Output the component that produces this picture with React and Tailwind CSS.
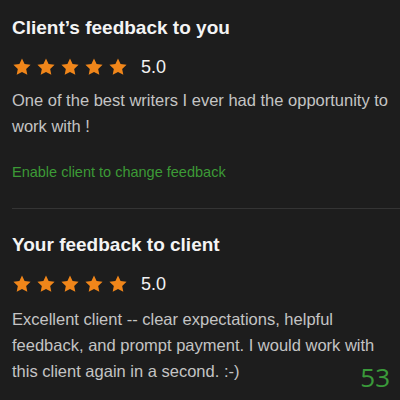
import React from "react";

const Star = () => (
  <svg width="20" height="20" viewBox="0 0 24 24" className="shrink-0">
    <path
      d="M12 1.8l3.1 6.6 7.2.9-5.3 5 1.4 7.1L12 17.9l-6.4 3.5L7 14.3 1.7 9.3l7.2-.9L12 1.8z"
      fill="#f0861a"
    />
  </svg>
);

const Rating = ({ value }) => (
  <div className="flex items-center h-[20px]">
    <div className="flex gap-[4px]">
      <Star />
      <Star />
      <Star />
      <Star />
      <Star />
    </div>
    <span className="ml-[13px] text-[18px] leading-[20px] text-[#f2f2f2]">{value}</span>
  </div>
);

export default function App() {
  return (
    <div
      className="w-[400px] h-[400px] bg-[#1d1d1d] overflow-hidden relative"
      style={{ fontFamily: '"Liberation Sans", Arial, sans-serif' }}
    >
      <section className="pl-[12px] pr-[4px] pt-[16px]">
        <h2 className="text-[19px] font-bold text-[#f4f4f4] leading-[24px]">
          Client’s feedback to you
        </h2>
        <div className="mt-[17px]">
          <Rating value="5.0" />
        </div>
        <p className="mt-[10px] text-[16.5px] leading-[26px] text-[#c4c4c4]">
          One of the best writers I ever had the opportunity to work with !
        </p>
        <p className="mt-[23px] text-[14.5px] leading-[20px] text-[#3c9a36]">
          Enable client to change feedback
        </p>
      </section>
      <div className="ml-[12px] mt-[26px] border-t border-[#343434]" />
      <section className="pl-[12px] pr-[4px] pt-[24px]">
        <h2 className="text-[19px] font-bold text-[#f4f4f4] leading-[24px]">
          Your feedback to client
        </h2>
        <div className="mt-[17px]">
          <Rating value="5.0" />
        </div>
        <p className="mt-[12px] w-[370px] text-[16.5px] leading-[26px] text-[#c4c4c4]">
          Excellent client -- clear expectations, helpful feedback, and prompt payment. I would work with this client again in a second. :-)
        </p>
      </section>
      <span
        className="absolute right-[10px] bottom-[8px] text-[26px] leading-[30px] text-[#3a9a3a]"
        style={{ fontFamily: '"Open Sans", sans-serif' }}
      >
        53
      </span>
    </div>
  );
}
